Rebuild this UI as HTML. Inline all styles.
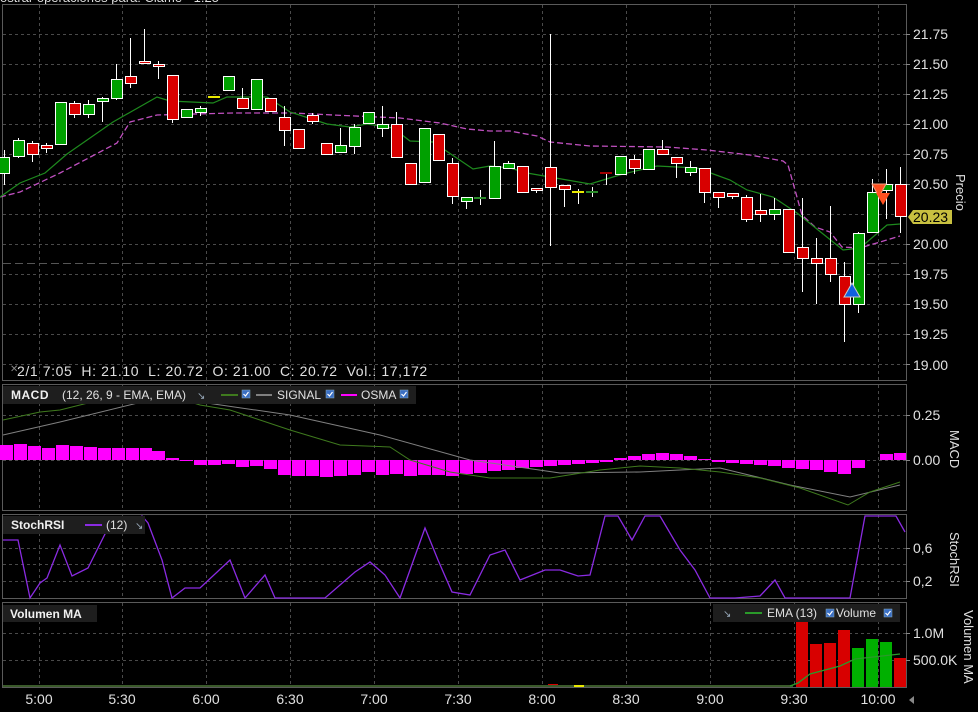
<!DOCTYPE html>
<html><head><meta charset="utf-8"><style>
html,body{margin:0;padding:0;background:#000;}
svg{display:block;font-family:"Liberation Sans",sans-serif;}
</style></head><body>
<svg width="978" height="712" viewBox="0 0 978 712" xmlns="http://www.w3.org/2000/svg">
<rect width="978" height="712" fill="#000"/>
<text x="0" y="2" fill="#ddd" font-size="13">ostrar operaciones para:  Cl&#225;me  ·  1:25</text>
<g fill="none" stroke="#5a5a5a" stroke-width="1">
<rect x="2.5" y="4.5" width="904" height="376"/>
<rect x="2.5" y="384.5" width="904" height="126"/>
<rect x="2.5" y="514.5" width="904" height="84"/>
<rect x="2.5" y="602.5" width="904" height="85"/>
</g>
<g stroke="#4a4a4a" stroke-dasharray="3,3" stroke-width="1">
<path d="M39.5 5V380M122.5 5V380M206.5 5V380M290.5 5V380M374.5 5V380M458.5 5V380M542.5 5V380M626.5 5V380M710.5 5V380M794.5 5V380M878.5 5V380"/>
<path d="M39.5 385V510M122.5 385V510M206.5 385V510M290.5 385V510M374.5 385V510M458.5 385V510M542.5 385V510M626.5 385V510M710.5 385V510M794.5 385V510M878.5 385V510"/>
<path d="M39.5 515V598M122.5 515V598M206.5 515V598M290.5 515V598M374.5 515V598M458.5 515V598M542.5 515V598M626.5 515V598M710.5 515V598M794.5 515V598M878.5 515V598"/>
<path d="M39.5 603V687M122.5 603V687M206.5 603V687M290.5 603V687M374.5 603V687M458.5 603V687M542.5 603V687M626.5 603V687M710.5 603V687M794.5 603V687M878.5 603V687"/>
<path d="M3 34.5H906M3 64.5H906M3 94.5H906M3 124.5H906M3 154.5H906M3 184.5H906M3 214.5H906M3 244.5H906M3 274.5H906M3 304.5H906M3 334.5H906M3 364.5H906"/>
<path d="M3 415.5H906M3 460.5H906M3 548.5H906M3 564.5H906M3 581.5H906M3 633.5H906M3 660.5H906"/>
</g>
<path d="M3 263.5H906" stroke="#555" stroke-dasharray="8,4"/>
<g stroke="#888"><path d="M906 34.5h4M906 64.5h4M906 94.5h4M906 124.5h4M906 154.5h4M906 184.5h4M906 244.5h4M906 274.5h4M906 304.5h4M906 334.5h4M906 364.5h4M906 415.5h4M906 460.5h4M906 548.5h4M906 581.5h4M906 633.5h4M906 660.5h4"/></g>
<polyline fill="none" stroke="#c050c0" stroke-width="1.3" stroke-dasharray="6,3" points="0,197 20,192 60,173 117,143 130,122 157,115 233,113 293,113 333,115 400,118 440,123 467,129 490,131 510,131 537,136 550,142 590,146 667,147 707,150 750,155 783,161 788,165 802,215 815,227 830,232 842,247 860,248 870,245 900,236"/>
<polyline fill="none" stroke="#1e8a1e" stroke-width="1.2" points="0,197 20,183 45,173 67,154 113,122 157,97 170,101 213,103 227,97 267,97 290,112 327,124 350,127 367,124 393,128 410,141 433,142 473,169 490,166 510,168 527,173 590,184 623,174 657,166 697,168 730,180 747,190 773,197 797,213 843,250 860,248 887,225 900,224"/>
<g stroke="#fff" stroke-width="1"><path d="M4.5 150V185M18.5 138V158M32.5 141V162M46.5 143V153M74.5 101V118M88.5 100V118M102.5 97V122M116.5 64V100M130.5 38V88M144.5 29V63M158.5 61V79M172.5 75V123M200.5 106V116M242.5 88V108M284.5 106V146M312.5 113V124M340.5 128V153M354.5 124V154M382.5 106V137M396.5 112V157M452.5 158V204M466.5 197V209M480.5 190V205M494.5 141V198M508.5 161V168M536.5 188V193M550.5 34V246M564.5 185V207M578.5 189V204M592.5 187V197M606.5 173V185M634.5 155V174M662.5 140V154M676.5 157V178M690.5 161V176M704.5 168V203M718.5 192V208M732.5 193V199M746.5 195V222M760.5 194V222M774.5 198V220M802.5 198V292M816.5 238V304M830.5 206V282M844.5 262V342M858.5 232V313M872.5 179V232M886.5 169V219M900.5 167V233"/></g>
<g stroke="#fff" stroke-width="1">
<g fill="#00a000">
<rect x="-1.5" y="157.5" width="11" height="16"/><rect x="13.5" y="140.5" width="11" height="16"/><rect x="55.5" y="102.5" width="11" height="42"/><rect x="83.5" y="104.5" width="11" height="10"/><rect x="97.5" y="98.5" width="11" height="3"/><rect x="111.5" y="79.5" width="11" height="19"/><rect x="181.5" y="109.5" width="11" height="8"/><rect x="195.5" y="108.5" width="11" height="4"/><rect x="223.5" y="76.5" width="11" height="14"/><rect x="251.5" y="79.5" width="11" height="30"/><rect x="335.5" y="145.5" width="11" height="7"/><rect x="349.5" y="127.5" width="11" height="19"/><rect x="363.5" y="112.5" width="11" height="11"/><rect x="377.5" y="124.5" width="11" height="4"/><rect x="419.5" y="128.5" width="11" height="54"/><rect x="461.5" y="197.5" width="11" height="4"/><rect x="489.5" y="166.5" width="11" height="32"/><rect x="503.5" y="163.5" width="11" height="5"/><rect x="615.5" y="156.5" width="11" height="18"/><rect x="643.5" y="149.5" width="11" height="20"/><rect x="685.5" y="167.5" width="11" height="5"/><rect x="769.5" y="209.5" width="11" height="5"/><rect x="853.5" y="233.5" width="11" height="71"/><rect x="867.5" y="192.5" width="11" height="40"/><rect x="881.5" y="184.5" width="11" height="6"/>
</g>
<g fill="#d80000">
<rect x="27.5" y="143.5" width="11" height="11"/><rect x="41.5" y="145.5" width="11" height="3"/><rect x="69.5" y="103.5" width="11" height="11"/><rect x="125.5" y="76.5" width="11" height="7"/><rect x="139.5" y="61.5" width="11" height="2"/><rect x="153.5" y="64.5" width="11" height="2"/><rect x="167.5" y="75.5" width="11" height="44"/><rect x="237.5" y="98.5" width="11" height="10"/><rect x="265.5" y="98.5" width="11" height="13"/><rect x="279.5" y="117.5" width="11" height="13"/><rect x="293.5" y="129.5" width="11" height="19"/><rect x="307.5" y="115.5" width="11" height="6"/><rect x="321.5" y="143.5" width="11" height="11"/><rect x="391.5" y="124.5" width="11" height="33"/><rect x="405.5" y="163.5" width="11" height="21"/><rect x="433.5" y="134.5" width="11" height="26"/><rect x="447.5" y="163.5" width="11" height="33"/><rect x="517.5" y="166.5" width="11" height="26"/><rect x="531.5" y="188.5" width="11" height="2"/><rect x="545.5" y="167.5" width="11" height="20"/><rect x="559.5" y="185.5" width="11" height="4"/><rect x="629.5" y="159.5" width="11" height="9"/><rect x="657.5" y="149.5" width="11" height="5"/><rect x="671.5" y="157.5" width="11" height="6"/><rect x="699.5" y="168.5" width="11" height="24"/><rect x="713.5" y="192.5" width="11" height="5"/><rect x="727.5" y="193.5" width="11" height="3"/><rect x="741.5" y="197.5" width="11" height="22"/><rect x="755.5" y="210.5" width="11" height="4"/><rect x="783.5" y="209.5" width="11" height="43"/><rect x="797.5" y="247.5" width="11" height="11"/><rect x="811.5" y="258.5" width="11" height="5"/><rect x="825.5" y="258.5" width="11" height="16"/><rect x="839.5" y="276.5" width="11" height="28"/><rect x="895.5" y="184.5" width="11" height="32"/>
</g>
</g>
<g stroke-width="2"><path d="M208 97h12M572 192h12" stroke="#e8e800"/><path d="M474 198h12M586 192h12" stroke="#2a8a2a"/><path d="M600 173h12" stroke="#a00000"/></g>
<polygon points="852,283 860,297 844,297" fill="#1060e0" stroke="#ccc" stroke-width="1"/>
<polygon points="872,184 886,184 879,197" fill="#ff5020" stroke="#f0a080" stroke-width="1"/>
<polygon points="876,193 890,193 883,205" fill="#ff5020"/>
<polygon points="908,217 913,210 952,210 952,224 913,224" fill="#c8c040"/>
<text x="913" y="222" font-size="14" fill="#000">20.23</text>
<g fill="#e0e0e0" font-size="14">
<text x="913" y="39">21.75</text><text x="913" y="69">21.50</text><text x="913" y="99">21.25</text><text x="913" y="129">21.00</text><text x="913" y="159">20.75</text><text x="913" y="189">20.50</text><text x="913" y="249">20.00</text><text x="913" y="279">19.75</text><text x="913" y="309">19.50</text><text x="913" y="339">19.25</text><text x="913" y="370">19.00</text>
<text x="913" y="420">0.25</text><text x="913" y="465">0.00</text>
<text x="913" y="553">0,6</text><text x="913" y="586">0,2</text>
<text x="913" y="638">1.0M</text><text x="913" y="665">500.0K</text>
</g>
<g fill="#e0e0e0" font-size="13">
<text transform="translate(956,174) rotate(90)">Precio</text>
<text transform="translate(950,430) rotate(90)">MACD</text>
<text transform="translate(950,532) rotate(90)">StochRSI</text>
<text transform="translate(964,610) rotate(90)">Volumen MA</text>
</g>
<text x="10" y="372" fill="#888" font-size="10">✕</text>
<text x="17" y="376" fill="#e0e0e0" font-size="14" letter-spacing="0.6" style="white-space:pre">2/1 7:05  H: 21.10  L: 20.72  O: 21.00  C: 20.72  Vol.: 17,172</text>
<g fill="#ff00ff">
<rect x="0" y="445" width="13" height="15"/><rect x="14" y="444" width="13" height="16"/><rect x="28" y="446" width="13" height="14"/><rect x="42" y="448" width="13" height="12"/><rect x="56" y="445" width="13" height="15"/><rect x="70" y="446" width="13" height="14"/><rect x="84" y="447" width="13" height="13"/><rect x="98" y="448" width="13" height="12"/><rect x="112" y="448" width="13" height="12"/><rect x="126" y="448" width="13" height="12"/><rect x="140" y="448" width="12" height="12"/><rect x="152" y="451" width="13" height="9"/><rect x="166" y="458" width="13" height="2"/>
<rect x="180" y="460" width="13" height="1"/><rect x="194" y="460" width="13" height="5"/><rect x="208" y="460" width="13" height="5"/><rect x="222" y="460" width="13" height="4"/><rect x="236" y="460" width="13" height="7"/><rect x="250" y="460" width="13" height="6"/><rect x="264" y="460" width="13" height="9"/><rect x="278" y="460" width="13" height="15"/><rect x="292" y="460" width="13" height="16"/><rect x="306" y="460" width="13" height="16"/><rect x="320" y="460" width="13" height="17"/><rect x="334" y="460" width="13" height="16"/><rect x="348" y="460" width="13" height="15"/><rect x="362" y="460" width="13" height="12"/><rect x="376" y="460" width="13" height="15"/><rect x="390" y="460" width="13" height="14"/><rect x="404" y="460" width="13" height="16"/><rect x="418" y="460" width="13" height="15"/><rect x="432" y="460" width="13" height="15"/><rect x="446" y="460" width="13" height="16"/><rect x="460" y="460" width="13" height="14"/><rect x="474" y="460" width="13" height="13"/><rect x="488" y="460" width="13" height="11"/><rect x="502" y="460" width="13" height="10"/><rect x="516" y="460" width="13" height="8"/><rect x="530" y="460" width="13" height="7"/><rect x="544" y="460" width="13" height="6"/><rect x="558" y="460" width="13" height="5"/><rect x="572" y="460" width="13" height="4"/><rect x="586" y="460" width="13" height="3"/><rect x="600" y="460" width="13" height="2"/>
<rect x="614" y="458" width="13" height="2"/><rect x="628" y="456" width="13" height="4"/><rect x="642" y="454" width="13" height="6"/><rect x="656" y="453" width="13" height="7"/><rect x="670" y="454" width="13" height="6"/><rect x="684" y="456" width="13" height="4"/><rect x="698" y="459" width="13" height="1"/>
<rect x="712" y="460" width="13" height="2"/><rect x="726" y="460" width="13" height="3"/><rect x="740" y="460" width="13" height="4"/><rect x="754" y="460" width="13" height="5"/><rect x="768" y="460" width="13" height="6"/><rect x="782" y="460" width="13" height="8"/><rect x="796" y="460" width="13" height="9"/><rect x="810" y="460" width="13" height="10"/><rect x="824" y="460" width="13" height="12"/><rect x="838" y="460" width="13" height="14"/><rect x="852" y="460" width="13" height="8"/>
<rect x="880" y="454" width="13" height="6"/><rect x="894" y="453" width="12" height="7"/>
</g>
<polyline fill="none" stroke="#808080" stroke-width="1" points="3,435 60,422 150,400 200,402 290,415 380,435 470,460 560,473 640,472 720,468 790,485 850,497 900,485"/>
<polyline fill="none" stroke="#3f7a1e" stroke-width="1" points="3,420 40,412 60,410 100,400 155,391 200,405 230,410 260,420 290,430 340,445 390,447 410,460 450,472 490,478 550,478 600,470 640,466 680,468 720,472 760,478 800,488 848,505 870,492 900,482"/>
<rect x="3" y="386" width="413" height="18" fill="#1e1e1e"/>
<text x="11" y="399" fill="#f0f0f0" font-size="12" font-weight="bold" letter-spacing="0.5">MACD</text>
<text x="62" y="399" fill="#e0e0e0" font-size="12">(12, 26, 9 - EMA, EMA)</text>
<text x="197" y="399" fill="#9ab" font-size="10">↘</text>
<path d="M221 395h17" stroke="#3f7a1e" stroke-width="2"/>
<path d="M256 395h16" stroke="#808080" stroke-width="2"/>
<text x="277" y="399" fill="#e0e0e0" font-size="12">SIGNAL</text>
<path d="M341 395h16" stroke="#ff00ff" stroke-width="2"/>
<text x="361" y="399" fill="#e0e0e0" font-size="12">OSMA</text>
<g fill="#3a6fc4" stroke="#8ab" stroke-width=".5"><rect x="242" y="390" width="8" height="8"/><rect x="326" y="390" width="8" height="8"/><rect x="400" y="390" width="8" height="8"/></g>
<g fill="none" stroke="#fff" stroke-width="1.2"><path d="M243.5 394l2 2 3-4M327.5 394l2 2 3-4M401.5 394l2 2 3-4"/></g>
<polyline fill="none" stroke="#8a2be2" stroke-width="1.3" points="3,540 18,540 30,598 40,583 47,578 60,545 72,576 88,568 112,520 128,525 142,516 148,523 162,560 172,598 185,588 200,588 230,560 245,598 265,575 275,598 300,598 325,598 355,572 370,562 385,575 400,598 425,528 438,560 452,592 470,595 490,555 505,550 520,580 545,570 560,570 578,576 590,575 605,516 618,516 632,540 645,516 660,516 680,550 695,570 710,598 735,598 760,596 775,580 785,598 850,598 865,516 880,516 896,516 905,532"/>
<rect x="3" y="516" width="142" height="18" fill="#1e1e1e"/>
<text x="11" y="529" fill="#f0f0f0" font-size="12" font-weight="bold">StochRSI</text>
<path d="M85 525h17" stroke="#8a2be2" stroke-width="2"/>
<text x="106" y="529" fill="#e0e0e0" font-size="12">(12)</text>
<text x="135" y="529" fill="#9ab" font-size="10">↘</text>
<g fill="#d80000"><rect x="796" y="608" width="12" height="79"/><rect x="810" y="644" width="12" height="43"/><rect x="824" y="643" width="12" height="44"/><rect x="838" y="630" width="12" height="57"/><rect x="894" y="658" width="12" height="29"/><rect x="548" y="684" width="10" height="3"/></g>
<g fill="#00b000"><rect x="852" y="648" width="12" height="39"/><rect x="866" y="639" width="12" height="48"/><rect x="880" y="642" width="12" height="45"/></g>
<path d="M3 686h790" stroke="#3a5a2a" stroke-width="2"/>
<path d="M574 686h10" stroke="#e8e800" stroke-width="2"/>
<polyline fill="none" stroke="#2a9a2a" stroke-width="1.3" points="790,686 798,683 810,674 840,666 855,659 900,654"/>
<rect x="3" y="605" width="94" height="17" fill="#1e1e1e"/>
<text x="10" y="618" fill="#f0f0f0" font-size="12" font-weight="bold">Volumen MA</text>
<rect x="713" y="604" width="187" height="18" fill="#1e1e1e"/>
<text x="723" y="617" fill="#9ab" font-size="10">↘</text>
<path d="M745 613h17" stroke="#2a9a2a" stroke-width="2"/>
<text x="767" y="617" fill="#e0e0e0" font-size="12">EMA (13)</text>
<text x="836" y="617" fill="#e0e0e0" font-size="12">Volume</text>
<g fill="#3a6fc4" stroke="#8ab" stroke-width=".5"><rect x="826" y="609" width="8" height="8"/><rect x="884" y="609" width="8" height="8"/></g>
<g fill="none" stroke="#fff" stroke-width="1.2"><path d="M827.5 613l2 2 3-4M885.5 613l2 2 3-4"/></g>
<g fill="#e0e0e0" font-size="14" text-anchor="middle">
<text x="39" y="704">5:00</text><text x="122" y="704">5:30</text><text x="206" y="704">6:00</text><text x="290" y="704">6:30</text><text x="374" y="704">7:00</text><text x="458" y="704">7:30</text><text x="542" y="704">8:00</text><text x="626" y="704">8:30</text><text x="710" y="704">9:00</text><text x="794" y="704">9:30</text><text x="878" y="704">10:00</text>
</g>
<polygon points="909,700 914,696 914,704" fill="#888"/>
</svg>
</body></html>
